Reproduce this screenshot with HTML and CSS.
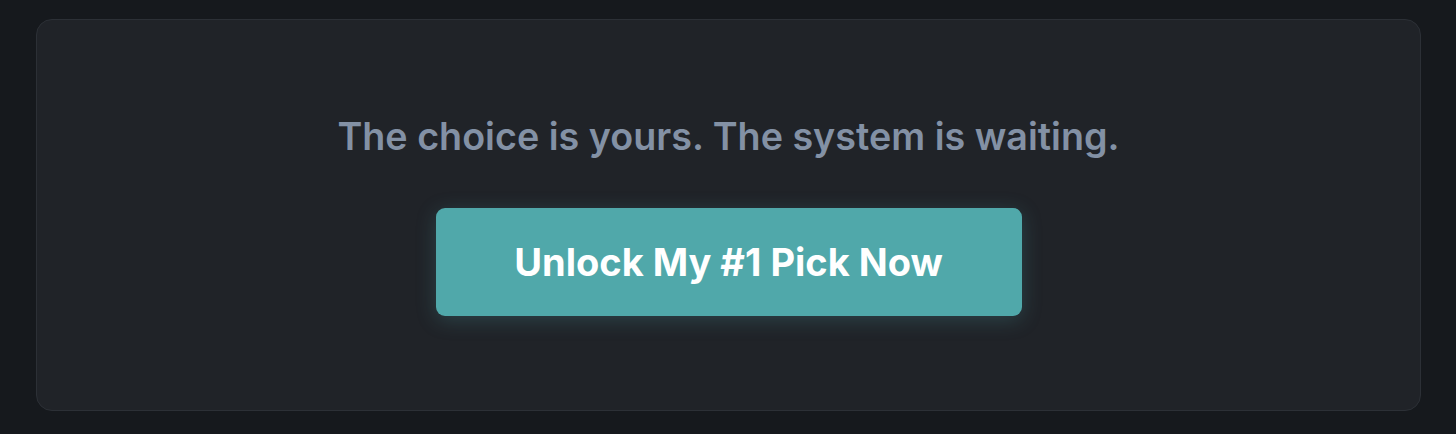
FILE: index.html
```html
<!DOCTYPE html>
<html lang="en">
<head>
<meta charset="utf-8">
<link rel="stylesheet" href="styles.css">
</head>
<body>
<main class="page">
  <section class="card">
    <p class="lead">The choice is yours. The system is waiting.</p>
    <button class="cta" type="button">Unlock My #1 Pick Now</button>
  </section>
</main>
</body>
</html>
```
FILE: styles.css
```css
* { box-sizing: border-box; }
html, body { margin: 0; padding: 0; }
body {
  background: #16191d;
  font-family: Inter, "Noto Sans", sans-serif;
  width: 1456px;
  height: 434px;
  overflow: hidden;
}
.page {
  padding: 19px 35px 23px 36px;
}
.card {
  height: 392px;
  background: #202328;
  border: 1px solid #2c3036;
  border-radius: 16px;
  display: flex;
  flex-direction: column;
  align-items: center;
  padding-top: 93px;
}
.lead {
  margin: 0;
  font-size: 37.7px;
  font-weight: 600;
  line-height: 46px;
  color: #8391a5;
}
.cta {
  margin-top: 49px;
  width: 586px;
  height: 108px;
  border: 0;
  border-radius: 9px;
  background: #50a8aa;
  color: #ffffff;
  font-family: Inter, "Noto Sans", sans-serif;
  font-size: 38px;
  font-weight: 700;
  box-shadow: 0 4px 20px rgba(80, 168, 170, 0.25);
}
```
